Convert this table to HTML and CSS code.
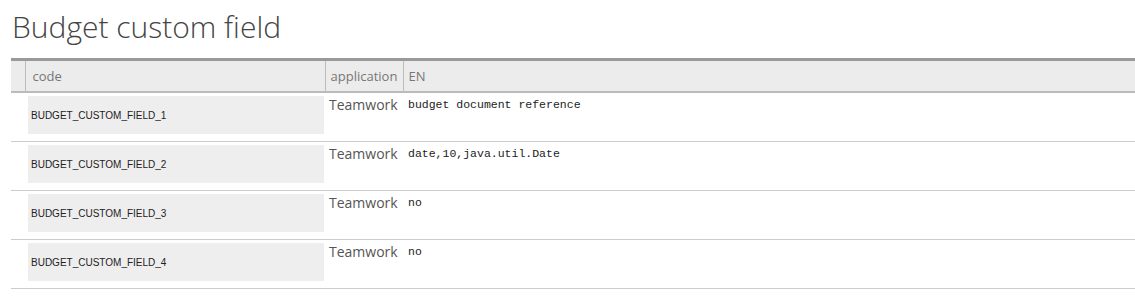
FILE: index.html
```html
<!DOCTYPE html>
<html>
<head>
<meta charset="utf-8">
<link rel="stylesheet" href="styles.css">
</head>
<body>
<h1 class="title">Budget custom field</h1>
<table class="grid">
  <thead>
    <tr>
      <th class="c-sel"></th>
      <th class="c-code">code</th>
      <th class="c-app">application</th>
      <th class="c-en">EN</th>
    </tr>
  </thead>
  <tbody>
    <tr>
      <td class="c-sel"></td>
      <td class="c-code"><div class="codebox">BUDGET_CUSTOM_FIELD_1</div></td>
      <td class="c-app">Teamwork</td>
      <td class="c-en">budget document reference</td>
    </tr>
    <tr>
      <td class="c-sel"></td>
      <td class="c-code"><div class="codebox">BUDGET_CUSTOM_FIELD_2</div></td>
      <td class="c-app">Teamwork</td>
      <td class="c-en">date,10,java.util.Date</td>
    </tr>
    <tr>
      <td class="c-sel"></td>
      <td class="c-code"><div class="codebox">BUDGET_CUSTOM_FIELD_3</div></td>
      <td class="c-app">Teamwork</td>
      <td class="c-en">no</td>
    </tr>
    <tr>
      <td class="c-sel"></td>
      <td class="c-code"><div class="codebox">BUDGET_CUSTOM_FIELD_4</div></td>
      <td class="c-app">Teamwork</td>
      <td class="c-en">no</td>
    </tr>
  </tbody>
</table>
</body>
</html>
```

FILE: styles.css
```css
html, body {
  margin: 0;
  padding: 0;
  background: #fff;
}
body {
  padding-left: 11px;
  font-family: "Open Sans", "Liberation Sans", sans-serif;
  color: #333;
}
.title {
  margin: 0;
  padding: 10px 0 14px 1px;
  font-size: 30px;
  font-weight: 300;
  line-height: 34px;
  color: #444;
}
.grid {
  width: 1124px;
  border-collapse: collapse;
  border-top: 3px solid #999;
  table-layout: fixed;
}
.grid th,
.grid td {
  box-sizing: border-box;
}
.grid th {
  background: #ececec;
  height: 32px;
  padding: 0 0 0 7px;
  font-weight: 400;
  font-size: 13px;
  color: #777;
  text-align: left;
  border-left: 1px solid #bbb;
  border-bottom: 2px solid #bbb;
}
.grid th.c-sel {
  border-left: none;
  padding: 0;
}
.grid th.c-app {
  padding-left: 5px;
}
.grid th.c-en {
  padding-left: 5px;
}
.c-sel { width: 14px; }
.c-code { width: 300px; }
.c-app { width: 78px; }
.grid td {
  border-bottom: 1px solid #ccc;
  padding: 0;
  vertical-align: top;
  height: 49px;
}
.grid td.c-code {
  padding: 3px 1px 7px 3px;
}
.codebox {
  background: #eee;
  height: 38px;
  display: flex;
  align-items: center;
  padding-left: 3px;
  padding-top: 2px;
  box-sizing: border-box;
  font-family: "Liberation Sans", Arial, sans-serif;
  font-size: 10px;
  color: #222;
}
.grid td.c-app {
  padding: 2px 0 0 4px;
  font-size: 14px;
  color: #555;
  line-height: 20px;
}
.grid td.c-en {
  padding: 4px 0 0 5px;
  font-family: "Liberation Mono", "Courier New", monospace;
  font-size: 11.5px;
  line-height: 16px;
  color: #222;
}
```
